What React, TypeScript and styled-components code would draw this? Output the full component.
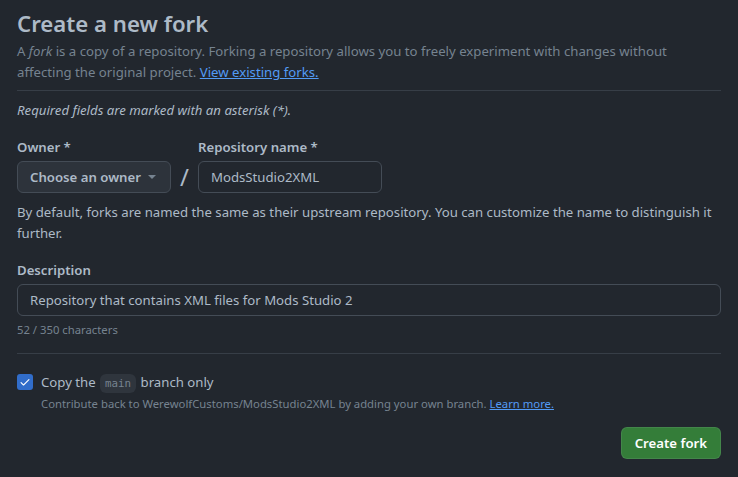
import React from 'react';
import styled, { createGlobalStyle } from 'styled-components';

const GlobalStyle = createGlobalStyle`
  body {
    margin: 0;
    background: #22272e;
    color: #adbac7;
    font-family: "Noto Sans", "Liberation Sans", sans-serif;
    font-size: 13.2px;
  }
`;

const Page = styled.div`
  padding: 8px 17px 16px 17px;
  display: flex;
  flex-direction: column;
`;

const Title = styled.h1`
  margin: 0 0 1px;
  font-size: 22.2px;
  font-weight: 600;
  line-height: 32px;
  color: #adbac7;
`;

const Lead = styled.p`
  margin: 0;
  color: #768390;
  line-height: 21px;
  padding-bottom: 7px;
  border-bottom: 1px solid #373e47;
`;

const Link = styled.a`
  color: #539bf5;
  text-decoration: underline;
  cursor: pointer;
`;

const Required = styled.p`
  margin: 9px 0 0;
  font-style: italic;
  line-height: 21px;
`;

const Row = styled.div`
  display: flex;
  align-items: flex-end;
  margin-top: 16px;
`;

const Field = styled.div`
  display: flex;
  flex-direction: column;
`;

const Label = styled.label`
  font-weight: 600;
  line-height: 20px;
  margin-bottom: 4px;
  color: #adbac7;
`;

const SelectButton = styled.button`
  display: flex;
  align-items: center;
  height: 32px;
  width: 154px;
  padding: 0 12px;
  background: #2d333b;
  border: 1px solid #444c56;
  border-radius: 6px;
  color: #adbac7;
  font: inherit;
  font-weight: 600;
  white-space: nowrap;
  box-sizing: border-box;
`;

const Caret = styled.span`
  width: 0;
  height: 0;
  border-left: 4px solid transparent;
  border-right: 4px solid transparent;
  border-top: 4px solid #768390;
  margin-left: auto;
  margin-right: 2px;
`;

const Slash = styled.span`
  font-size: 24px;
  line-height: 32px;
  padding: 0 9px;
  color: #adbac7;
`;

const Input = styled.input<{ $width?: string }>`
  height: 32px;
  width: ${(p) => p.$width || '100%'};
  box-sizing: border-box;
  padding: 0 12px;
  background: #22272e;
  border: 1px solid #444c56;
  border-radius: 6px;
  color: #adbac7;
  font: inherit;
  outline: none;
`;

const Help = styled.p`
  margin: 9px 0 0;
  line-height: 21px;
  color: #adbac7;
`;

const Section = styled.div`
  margin-top: 16px;
  display: flex;
  flex-direction: column;
`;

const Counter = styled.div`
  font-size: 11.3px;
  line-height: 18px;
  color: #768390;
  margin-top: 5px;
  padding-bottom: 14px;
  border-bottom: 1px solid #373e47;
`;

const CheckRow = styled.div`
  display: flex;
  gap: 8px;
  margin-top: 17px;
`;

const Box = styled.span`
  width: 16px;
  height: 16px;
  border-radius: 3px;
  background: #316dca;
  display: flex;
  align-items: center;
  justify-content: center;
  margin-top: 3px;
  flex-shrink: 0;
`;

const CheckText = styled.div`
  display: flex;
  flex-direction: column;
`;

const CheckLabel = styled.span`
  line-height: 22px;
  color: #adbac7;
`;

const Code = styled.code`
  font-family: "DejaVu Sans Mono", "Liberation Mono", monospace;
  font-size: 10.8px;
  background: rgba(99, 110, 123, 0.2);
  color: #768390;
  border-radius: 6px;
  padding: 3px 5px;
  margin: 0 1px;
`;

const Note = styled.span`
  font-size: 11.3px;
  line-height: 18px;
  color: #768390;
`;

const Footer = styled.div`
  display: flex;
  justify-content: flex-end;
  margin-top: 14px;
`;

const PrimaryButton = styled.button`
  height: 32px;
  padding: 0 13px;
  background: #347d39;
  border: 1px solid rgba(205, 217, 229, 0.1);
  border-radius: 6px;
  color: #ffffff;
  font: inherit;
  font-weight: 600;
`;

export default function App() {
  return (
    <>
      <GlobalStyle />
      <Page>
        <Title>Create a new fork</Title>
        <Lead>
          A <em>fork</em> is a copy of a repository. Forking a repository allows you to freely experiment with
          changes without affecting the original project. <Link>View existing forks.</Link>
        </Lead>
        <Required>Required fields are marked with an asterisk (*).</Required>
        <Row>
          <Field>
            <Label>Owner *</Label>
            <SelectButton>
              Choose an owner
              <Caret />
            </SelectButton>
          </Field>
          <Slash>/</Slash>
          <Field>
            <Label>Repository name *</Label>
            <Input $width="184px" defaultValue="ModsStudio2XML" />
          </Field>
        </Row>
        <Help>
          By default, forks are named the same as their upstream repository. You can customize the name to
          distinguish it further.
        </Help>
        <Section>
          <Label>Description</Label>
          <Input defaultValue="Repository that contains XML files for Mods Studio 2" />
          <Counter>52 / 350 characters</Counter>
        </Section>
        <CheckRow>
          <Box>
            <svg width="12" height="12" viewBox="0 0 16 16" fill="#ffffff">
              <path d="M13.78 4.22a.75.75 0 0 1 0 1.06l-7.25 7.25a.75.75 0 0 1-1.06 0L2.22 9.28a.751.751 0 0 1 .018-1.042.751.751 0 0 1 1.042-.018L6 10.94l6.72-6.72a.75.75 0 0 1 1.06 0Z" />
            </svg>
          </Box>
          <CheckText>
            <CheckLabel>
              Copy the <Code>main</Code> branch only
            </CheckLabel>
            <Note>
              Contribute back to WerewolfCustoms/ModsStudio2XML by adding your own branch.{' '}
              <Link>Learn more.</Link>
            </Note>
          </CheckText>
        </CheckRow>
        <Footer>
          <PrimaryButton>Create fork</PrimaryButton>
        </Footer>
      </Page>
    </>
  );
}
